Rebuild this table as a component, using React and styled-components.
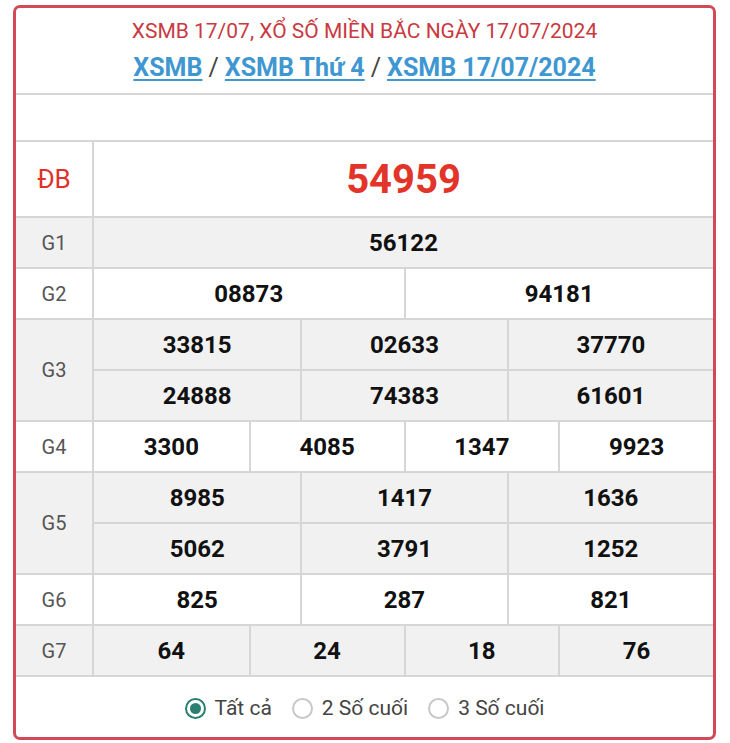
import React from "react";
import styled, { createGlobalStyle } from "styled-components";

const Global = createGlobalStyle`
  html, body { margin: 0; padding: 0; background: #fff; }
  body { font-family: Roboto, "Noto Sans", Arial, sans-serif; }
  * { box-sizing: border-box; }
`;

const Card = styled.div`
  margin: 5px 14px 0 13px;
  border: 3px solid #d24a55;
  border-radius: 7px;
  overflow: hidden;
  background: #fff;
`;

const Header = styled.div`
  padding: 8px 0 0;
  height: 85px;
  text-align: center;
`;

const Title = styled.h1`
  margin: 0;
  font-size: 21px;
  font-weight: 400;
  color: #c9393f;
  line-height: 30px;
`;

const Crumbs = styled.div`
  margin-top: 6px;
  font-size: 25px;
  font-weight: 700;
  line-height: 31px;
  color: #444;
`;

const Crumb = styled.a`
  color: #3f97d1;
  text-decoration: underline;
  text-underline-offset: 3px;
  text-decoration-thickness: 2px;
`;

const Sep = styled.span`
  font-weight: 400;
  color: #444;
  margin: 0 6px;
`;

const Blank = styled.div`
  height: 47px;
  border-top: 2px solid #d6d6d6;
`;

const Row = styled.div`
  display: flex;
  border-top: 2px solid #d6d6d6;
  background: ${(p) => (p.$alt ? "#f1f1f1" : "#fff")};
`;

const Label = styled.div`
  width: 78px;
  flex: none;
  display: flex;
  align-items: center;
  justify-content: center;
  border-right: 2px solid #d6d6d6;
  font-size: ${(p) => (p.$special ? "26px" : "20px")};
  color: ${(p) => (p.$special ? "#e0302a" : "#555")};
`;

const Cells = styled.div`
  flex: 1;
  display: grid;
  grid-template-columns: repeat(${(p) => p.$cols}, 1fr);
`;

const Cell = styled.div`
  height: ${(p) => (p.$special ? "74px" : "49px")};
  display: flex;
  align-items: center;
  justify-content: center;
  font-weight: 700;
  font-size: ${(p) => (p.$special ? "40px" : "24px")};
  color: ${(p) => (p.$special ? "#e3342a" : "#111")};
  border-left: ${(p) => (p.$first ? "none" : "2px solid #d6d6d6")};
  border-top: ${(p) => (p.$sub ? "2px solid #d6d6d6" : "none")};
  ${(p) => (p.$sub ? "height: 51px;" : "")}
`;

const Footer = styled.div`
  border-top: 2px solid #d6d6d6;
  height: 62px;
  display: flex;
  align-items: center;
  justify-content: center;
  gap: 20px;
  padding-top: 2px;
`;

const Option = styled.label`
  display: flex;
  align-items: center;
  gap: 9px;
  font-size: 21px;
  color: #444;
`;

const Radio = styled.span`
  width: 21px;
  height: 21px;
  border-radius: 50%;
  border: 2px solid ${(p) => (p.$on ? "#2a7f72" : "#c8c8c8")};
  display: flex;
  align-items: center;
  justify-content: center;
  &::after {
    content: "";
    width: 11px;
    height: 11px;
    border-radius: 50%;
    background: ${(p) => (p.$on ? "#2a7f72" : "transparent")};
  }
`;

const rows = [
  { label: "G1", cols: 1, nums: ["56122"], alt: true },
  { label: "G2", cols: 2, nums: ["08873", "94181"] },
  { label: "G3", cols: 3, nums: ["33815", "02633", "37770", "24888", "74383", "61601"], alt: true },
  { label: "G4", cols: 4, nums: ["3300", "4085", "1347", "9923"] },
  { label: "G5", cols: 3, nums: ["8985", "1417", "1636", "5062", "3791", "1252"], alt: true },
  { label: "G6", cols: 3, nums: ["825", "287", "821"] },
  { label: "G7", cols: 4, nums: ["64", "24", "18", "76"], alt: true },
];

export default function App() {
  return (
    <>
      <Global />
      <Card>
        <Header>
          <Title>XSMB 17/07, XỔ SỐ MIỀN BẮC NGÀY 17/07/2024</Title>
          <Crumbs>
            <Crumb href="#">XSMB</Crumb>
            <Sep>/</Sep>
            <Crumb href="#">XSMB Thứ 4</Crumb>
            <Sep>/</Sep>
            <Crumb href="#">XSMB 17/07/2024</Crumb>
          </Crumbs>
        </Header>
        <Blank />
        <Row>
          <Label $special>ĐB</Label>
          <Cells $cols={1}>
            <Cell $special $first>54959</Cell>
          </Cells>
        </Row>
        {rows.map((r) => (
          <Row key={r.label} $alt={r.alt}>
            <Label>{r.label}</Label>
            <Cells $cols={r.cols}>
              {r.nums.map((n, i) => (
                <Cell key={i} $first={i % r.cols === 0} $sub={i >= r.cols}>
                  {n}
                </Cell>
              ))}
            </Cells>
          </Row>
        ))}
        <Footer>
          <Option><Radio $on />Tất cả</Option>
          <Option><Radio />2 Số cuối</Option>
          <Option><Radio />3 Số cuối</Option>
        </Footer>
      </Card>
    </>
  );
}
